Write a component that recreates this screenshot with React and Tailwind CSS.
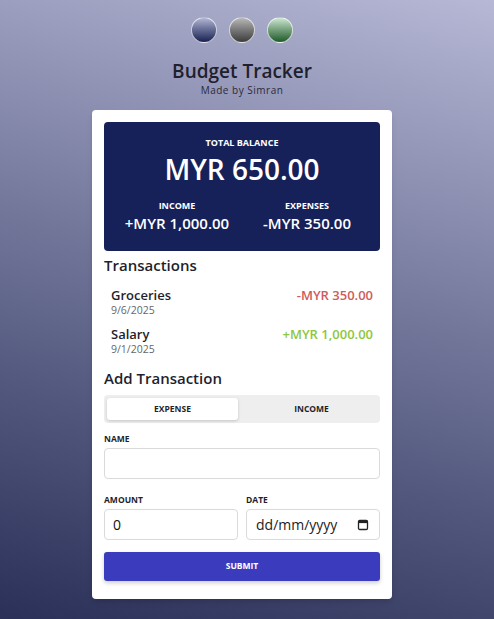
import React, { useState } from "react";

const transactions = [
  { name: "Groceries", date: "9/6/2025", amount: "-MYR 350.00", type: "expense" },
  { name: "Salary", date: "9/1/2025", amount: "+MYR 1,000.00", type: "income" },
];

const themes = [
  "bg-linear-to-b from-[#b4b7d4] to-[#1c2252]",
  "bg-linear-to-b from-[#b8b8b8] to-[#3d3d3d]",
  "bg-linear-to-b from-[#cde8d2] to-[#1b5a2b]",
];

const CalendarIcon = () => (
  <svg width="12" height="12" viewBox="0 0 12 12" fill="none">
    <rect x="1.5" y="1.5" width="9" height="9" rx="1.2" stroke="#222" strokeWidth="1.3" />
    <rect x="1.5" y="1.5" width="9" height="2.6" fill="#222" />
  </svg>
);

export default function App() {
  const [mode, setMode] = useState("expense");

  return (
    <div
      className="min-h-[619px] w-full bg-linear-195 from-[#b7b8d6] to-[#2a3057] flex flex-col items-center pt-[17px] pr-[10px] pb-5"
      style={{ fontFamily: "'Open Sans', 'Noto Sans', sans-serif" }}
    >
      {/* Theme switcher */}
      <div className="flex gap-3">
        {themes.map((t, i) => (
          <button
            key={i}
            className={`w-[26px] h-[26px] rounded-full border-[1.5px] border-white/70 ${t}`}
          />
        ))}
      </div>

      {/* Header */}
      <h1 className="mt-[17px] text-[19px] font-semibold leading-[22px] text-[#1f1f2e]">
        Budget Tracker
      </h1>
      <p className="mt-[2px] text-[10px] leading-[13px] tracking-[0.05em] text-[#2a2a3a]">Made by Simran</p>

      {/* Card */}
      <div className="mt-[13px] w-[300px] bg-white rounded-[4px] px-3 pt-3 pb-[18px] shadow-md">
        {/* Balance */}
        <div className="bg-[#172159] rounded-[4px] text-white text-center pt-[16px] pb-[18px]">
          <div className="text-[9px] font-bold leading-[10px]">TOTAL BALANCE</div>
          <div className="text-[28px] font-semibold leading-8 mt-[5px]">MYR 650.00</div>
          <div className="grid grid-cols-2 mt-[16px] px-2">
            <div>
              <div className="text-[9px] font-bold leading-[10px]">INCOME</div>
              <div className="text-[15px] font-semibold leading-5 mt-[2px]">+MYR 1,000.00</div>
            </div>
            <div>
              <div className="text-[9px] font-bold leading-[10px]">EXPENSES</div>
              <div className="text-[15px] font-semibold leading-5 mt-[2px]">-MYR 350.00</div>
            </div>
          </div>
        </div>

        {/* Transactions */}
        <h2 className="mt-[4px] text-[15px] font-semibold leading-5 text-[#1f1f2e]">Transactions</h2>
        <div className="mt-[12px] flex flex-col gap-[9px] px-[7px]">
          {transactions.map((tx) => (
            <div key={tx.name} className="flex justify-between items-start">
              <div>
                <div className="text-[13px] font-semibold leading-4 text-[#1f1f2e]">{tx.name}</div>
                <div className="text-[10.5px] leading-[14px] text-[#666]">{tx.date}</div>
              </div>
              <div
                className={`text-[13px] font-semibold leading-4 ${
                  tx.type === "expense" ? "text-[#d05a5c]" : "text-[#8dc63f]"
                }`}
              >
                {tx.amount}
              </div>
            </div>
          ))}
        </div>

        {/* Add Transaction */}
        <h2 className="mt-[12px] text-[15px] font-semibold leading-5 text-[#1f1f2e]">Add Transaction</h2>
        <div className="mt-[7px] bg-[#eeeeee] rounded-[4px] p-[3px] grid grid-cols-2 gap-2">
          <button
            onClick={() => setMode("expense")}
            className={`h-[22px] rounded-[3px] text-[8.5px] font-bold text-[#1f1f2e] ${
              mode === "expense" ? "bg-white shadow-[0_1px_3px_rgba(0,0,0,0.18)]" : ""
            }`}
          >
            EXPENSE
          </button>
          <button
            onClick={() => setMode("income")}
            className={`h-[22px] rounded-[3px] text-[8.5px] font-bold text-[#1f1f2e] ${
              mode === "income" ? "bg-white shadow-[0_1px_3px_rgba(0,0,0,0.18)]" : ""
            }`}
          >
            INCOME
          </button>
        </div>

        <label className="block mt-[11px] text-[8.5px] font-bold leading-[10px] text-[#1f1f2e]">NAME</label>
        <input
          type="text"
          className="mt-[4px] w-full h-[31px] border border-[#dadada] rounded-[4px] px-2 text-[14px] outline-none"
        />

        <div className="mt-[16px] grid grid-cols-2 gap-2">
          <div>
            <label className="block text-[8.5px] font-bold leading-[10px] text-[#1f1f2e]">AMOUNT</label>
            <input
              type="number"
              defaultValue={0}
              className="mt-[4px] w-full h-[31px] border border-[#dadada] rounded-[4px] px-[8px] text-[14px] text-[#111] outline-none"
            />
          </div>
          <div>
            <label className="block text-[8.5px] font-bold leading-[10px] text-[#1f1f2e]">DATE</label>
            <div className="mt-[4px] w-full h-[31px] border border-[#dadada] rounded-[4px] pl-[9px] pr-[10px] flex items-center gap-1">
              <input
                type="text"
                placeholder="dd/mm/yyyy"
                className="min-w-0 flex-1 text-[14px] text-[#111] placeholder:text-[#222] outline-none"
              />
              <CalendarIcon />
            </div>
          </div>
        </div>

        <button className="mt-[12px] w-full h-[29px] bg-[#3b3cbd] rounded-[3px] text-white text-[8.5px] font-bold shadow-[0_2px_4px_rgba(0,0,0,0.2)]">
          SUBMIT
        </button>
      </div>
    </div>
  );
}
